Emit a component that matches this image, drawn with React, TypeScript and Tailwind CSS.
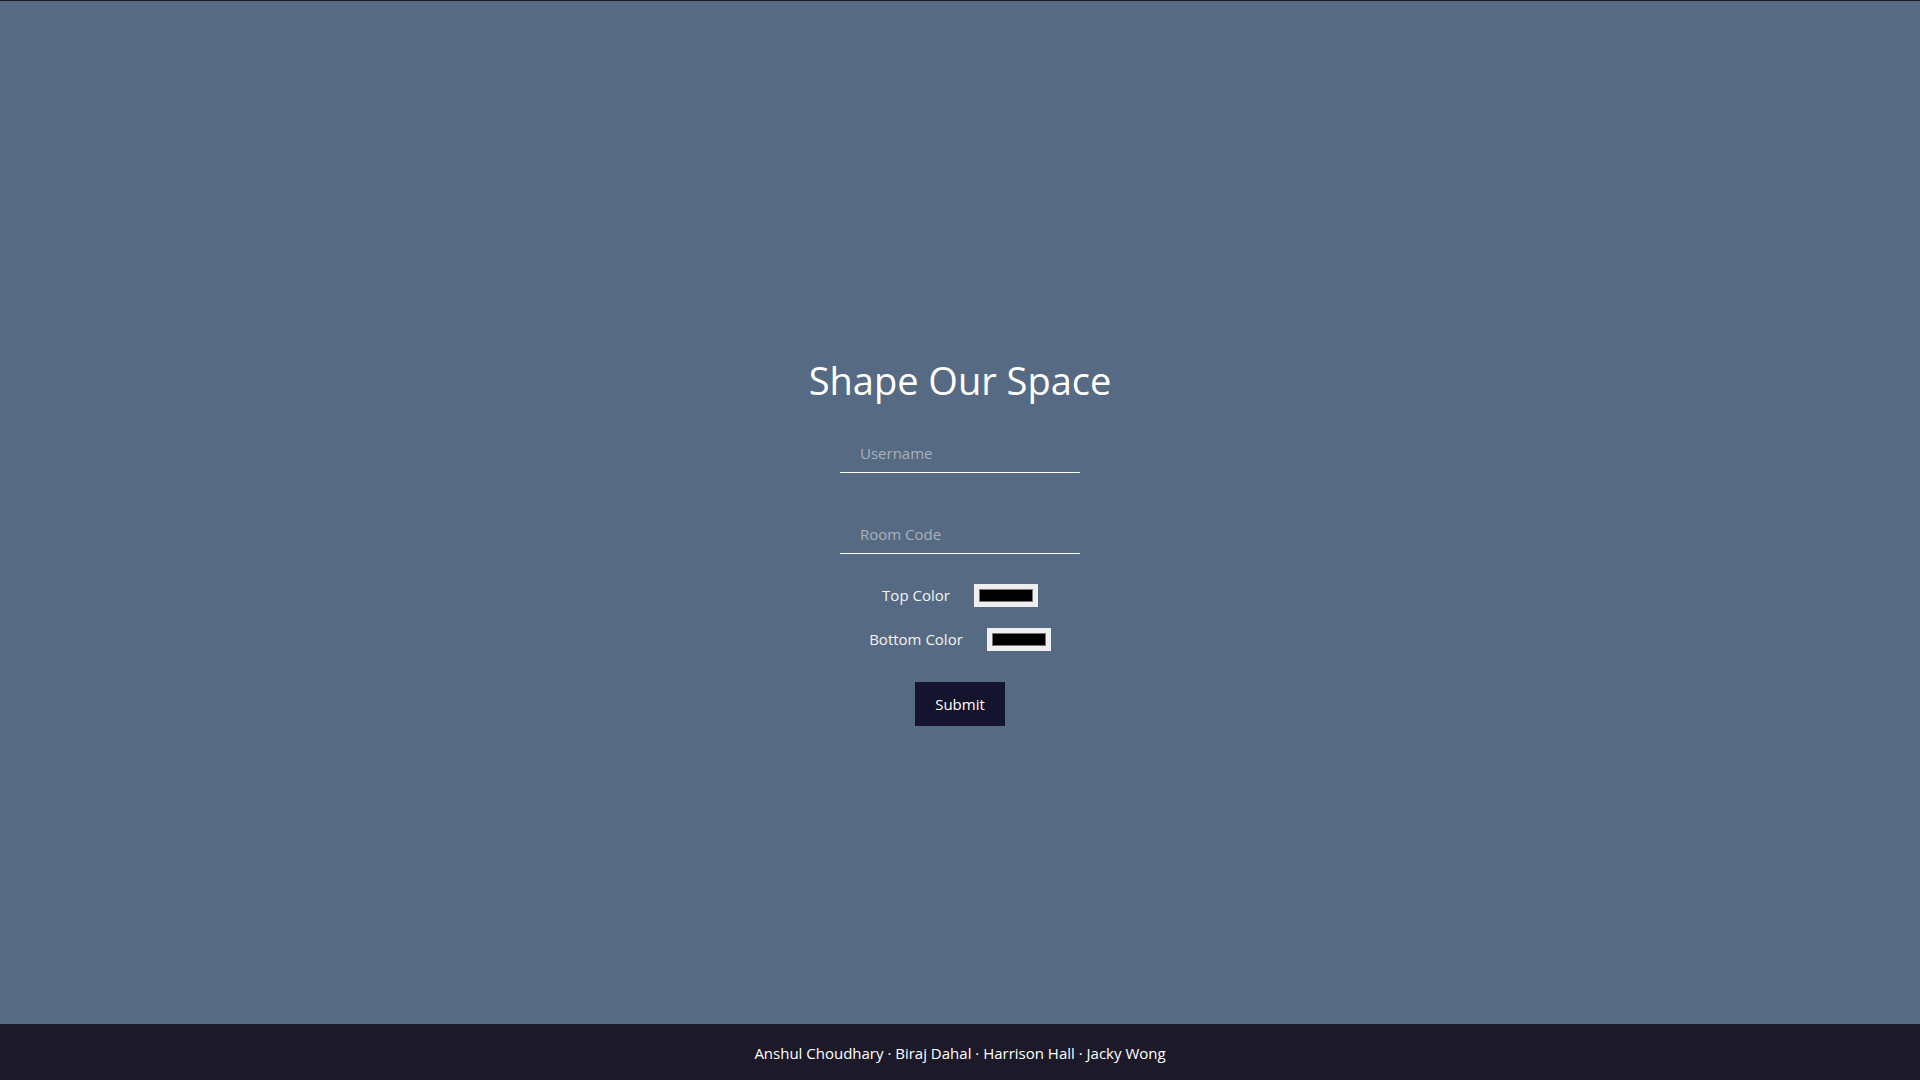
import React from "react";

const font = { fontFamily: '"Segoe UI", "Open Sans", "Noto Sans", sans-serif' };

function ColorSwatch() {
  return (
    <div className="w-[64px] h-[23px] bg-[#efefef] p-[5px] box-border">
      <div className="w-full h-full bg-black border border-[#777777] box-border" />
    </div>
  );
}

export default function App() {
  return (
    <div
      className="h-screen w-full flex flex-col bg-[#566a83] border-t border-[#1b1b22] box-border overflow-hidden"
      style={font}
    >
      <main className="flex-1 flex flex-col items-center pt-[357px]">
        <h1 className="text-[38px] leading-[45px] text-white font-normal">Shape Our Space</h1>
        <input
          type="text"
          placeholder="Username"
          className="mt-[30px] w-[240px] h-[40px] bg-transparent border-0 border-b border-white pl-[20px] text-[15px] text-white placeholder:text-[#a9b1bd] outline-none"
        />
        <input
          type="text"
          placeholder="Room Code"
          className="mt-[41px] w-[240px] h-[40px] bg-transparent border-0 border-b border-white pl-[20px] text-[15px] text-white placeholder:text-[#a9b1bd] outline-none"
        />
        <div className="mt-[30px] flex flex-col items-center gap-[21px]">
          <div className="flex items-center gap-[24px]">
            <span className="text-[15px] text-[#f4f4f4]">Top Color</span>
            <ColorSwatch />
          </div>
          <div className="flex items-center gap-[24px]">
            <span className="text-[15px] text-[#f4f4f4]">Bottom Color</span>
            <ColorSwatch />
          </div>
        </div>
        <button className="mt-[31px] w-[90px] h-[44px] bg-[#14142f] text-white text-[15px]">Submit</button>
      </main>
      <footer className="h-[56px] shrink-0 bg-[#1c1a28] flex items-center justify-center pt-[2px] text-[15px] text-white">
        Anshul Choudhary · Biraj Dahal · Harrison Hall · Jacky Wong
      </footer>
    </div>
  );
}
